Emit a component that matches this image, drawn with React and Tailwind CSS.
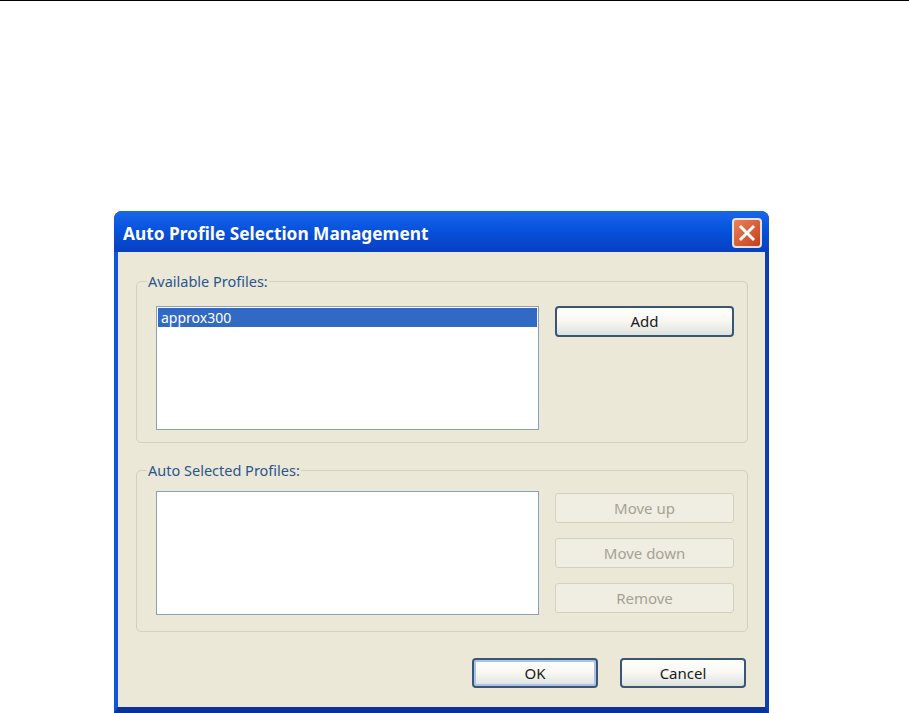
import React from 'react'

const font = { fontFamily: '"Noto Sans", sans-serif' }

function XpButton({ children, className = '', disabled = false, isDefault = false }) {
  if (disabled) {
    return (
      <button
        disabled
        className={`flex items-center justify-center rounded-[3px] border border-[#d3d0be] bg-[#f0eee3] text-[15px] text-[#a5a294] ${className}`}
      >
        {children}
      </button>
    )
  }
  return (
    <button
      className={`flex items-center justify-center rounded-[4px] border-2 border-[#3a5674] bg-gradient-to-b from-[#ffffff] via-[#f8f7f1] to-[#dde2df] text-[15px] text-[#1a1a1a] ${isDefault ? 'shadow-[inset_0_0_0_2px_#a8c4ee]' : ''} ${className}`}
    >
      {children}
    </button>
  )
}

function GroupBox({ title, className = '', children }) {
  return (
    <fieldset className={`rounded-[5px] border border-[#d4d0bd] pl-[19px] pr-[13px] ${className}`}>
      <legend className="-ml-[9px] h-[20px] px-[1px] text-[14.5px] leading-[20px] text-[#28568f]">{title}</legend>
      {children}
    </fieldset>
  )
}

export default function App() {
  return (
    <div className="flex h-[713px] flex-col overflow-hidden bg-white" style={font}>
      <div className="h-px bg-black" />

      {/* DIALOG WINDOW */}
      <div className="ml-[114px] mt-[210px] flex h-[502px] w-[655px] flex-col overflow-hidden rounded-t-[8px] bg-[#0a3ea8]">
        {/* TITLE BAR */}
        <div className="flex h-[41px] shrink-0 items-center justify-between bg-gradient-to-b from-[#1a66e8] via-[#0650dc] to-[#0840c0] pl-[9px] pr-[7px] pt-[3px]">
          <span className="mt-[1px] text-[17.3px] font-bold text-white">Auto Profile Selection Management</span>
          <div className="flex h-[30px] w-[30px] items-center justify-center rounded-[4px] border-2 border-[#e6e2dc] bg-gradient-to-br from-[#ea8058] to-[#c63d1b]">
            <svg width="18" height="18" viewBox="0 0 18 18">
              <path d="M3 3 L15 15 M15 3 L3 15" stroke="#ffffff" strokeWidth="3" strokeLinecap="square" />
            </svg>
          </div>
        </div>

        {/* BODY */}
        <div className="flex flex-1 border-b-[6px] border-l-[4px] border-r-[4px] border-b-[#0a3299] border-l-[#0c55e0] border-r-[#0a3fae]">
          <div className="flex flex-1 flex-col bg-[#ebe8d8] pl-[18px] pr-[17px] pt-[19px]">
            <GroupBox title="Available Profiles:" className="h-[172px] pt-[15px]">
              <div className="flex gap-[16px]">
                <div className="h-[124px] w-[383px] border border-[#8a9fb8] bg-white p-[1px]">
                  <div className="flex h-[19px] items-center bg-[#316ac5] pl-[3px] text-[14px] text-white">approx300</div>
                </div>
                <XpButton className="h-[31px] w-[179px]">Add</XpButton>
              </div>
            </GroupBox>

            <GroupBox title="Auto Selected Profiles:" className="mt-[17px] h-[172px] pt-[11px]">
              <div className="flex gap-[16px]">
                <div className="h-[124px] w-[383px] border border-[#8a9fb8] bg-white" />
                <div className="flex w-[179px] flex-col gap-[15px] pt-[2px]">
                  <XpButton disabled className="h-[30px]">Move up</XpButton>
                  <XpButton disabled className="h-[30px]">Move down</XpButton>
                  <XpButton disabled className="h-[30px]">Remove</XpButton>
                </div>
              </div>
            </GroupBox>

            <div className="mt-[26px] flex justify-end gap-[22px] pr-[2px]">
              <XpButton isDefault className="h-[30px] w-[126px]">OK</XpButton>
              <XpButton className="h-[30px] w-[126px]">Cancel</XpButton>
            </div>
          </div>
        </div>
      </div>
    </div>
  )
}
